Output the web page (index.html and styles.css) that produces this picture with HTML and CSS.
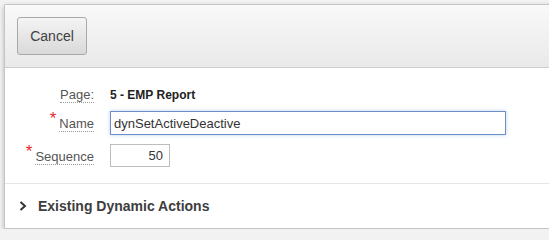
FILE: index.html
```html
<!DOCTYPE html>
<html lang="en">

<head>
    <meta charset="UTF-8">
    <title>Create Dynamic Action</title>
    <link rel="stylesheet" href="styles.css">
</head>

<body>
    <div class="region">
        <div class="region-header">
            <button type="button" class="btn-cancel">Cancel</button>
        </div>
        <div class="region-body">
            <div class="field">
                <div class="field-label"><span class="label-text">Page:</span></div>
                <div class="field-value display">5 - EMP Report</div>
            </div>
            <div class="field">
                <div class="field-label"><span class="req">*</span><span class="label-text">Name</span></div>
                <div class="field-value"><input type="text" class="input-name" value="dynSetActiveDeactive"></div>
            </div>
            <div class="field">
                <div class="field-label"><span class="req">*</span><span class="label-text">Sequence</span></div>
                <div class="field-value"><input type="text" class="input-seq" value="50"></div>
            </div>
        </div>
        <div class="region-footer">
            <svg class="chevron" width="8" height="10" viewBox="0 0 8 10">
                <path d="M1.5 1 L6 5 L1.5 9" fill="none" stroke="#333" stroke-width="2"/>
            </svg>
            <span class="footer-title">Existing Dynamic Actions</span>
        </div>
    </div>
</body>

</html>
```

FILE: styles.css
```css
* {
    font-family: "Liberation Sans", Arial, sans-serif;
    box-sizing: border-box;
}

body {
    margin: 0;
    padding: 4px 0 0 4px;
    background: #f2f2f2;
    overflow: hidden;
}

.region {
    width: 560px;
    background: #ffffff;
    border: 1px solid #c4c4c4;
    border-right: none;
    border-radius: 2px 0 0 2px;
    box-shadow: 0 2px 5px rgba(0, 0, 0, 0.25);
}

.region-header {
    height: 63px;
    padding: 12px 0 0 12px;
    background: linear-gradient(#f9f9f9, #e9e9e9);
    border-bottom: 1px solid #cdcdcd;
}

.btn-cancel {
    width: 70px;
    height: 38px;
    border: 1px solid #a9a9a9;
    border-radius: 3px;
    background: linear-gradient(#f4f4f4, #d9d9d9);
    color: #404040;
    font-size: 14px;
    padding: 0;
}

.region-body {
    padding: 19px 0 16px;
    border-bottom: 1px solid #e6e6e6;
}

.field {
    display: flex;
    align-items: center;
    margin-bottom: 9px;
}

.field:last-child {
    margin-bottom: 0;
}

.field-label {
    width: 89px;
    text-align: right;
    font-size: 13px;
    color: #555555;
}

.label-text {
    border-bottom: 1px dotted #999999;
}

.req {
    color: #e42a2a;
    font-size: 17px;
    position: relative;
    top: -4px;
    margin-right: 3px;
}

.field-value {
    margin-left: 16px;
}

.display {
    font-size: 12px;
    font-weight: bold;
    color: #222222;
}

.field-value>input {
    height: 24px;
    border: 1px solid #bdbdbd;
    font-size: 13px;
    color: #333333;
    padding: 0 3px;
    outline: none;
}

.input-name {
    width: 396px;
    border-color: #6d8fc8 !important;
    box-shadow: 0 0 4px rgba(110, 150, 220, 0.45);
}

.input-seq {
    width: 60px;
    height: 23px !important;
    text-align: right;
    padding-right: 6px !important;
}

.region-footer {
    height: 44px;
    display: flex;
    align-items: center;
    padding-left: 14px;
}

.chevron {
    margin-right: 11px;
}

.footer-title {
    font-size: 14px;
    font-weight: bold;
    color: #3d3d3d;
}
```
